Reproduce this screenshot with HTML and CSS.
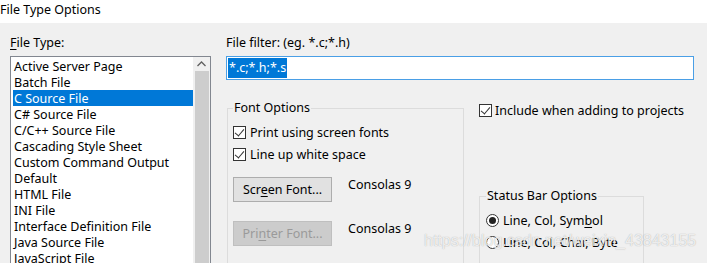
FILE: index.html
```html
<!DOCTYPE html>
<html lang="en">
<head>
    <meta charset="utf-8">
    <title>File Type Options</title>
    <link rel="stylesheet" href="styles.css">
</head>
<body>
    <div class="title-bar">File Type Options</div>

    <div class="dialog">
        <div class="left-col">
            <div class="field-label"><u>F</u>ile Type:</div>
            <div class="listbox">
                <ul class="type-list">
                    <li>Active Server Page</li>
                    <li>Batch File</li>
                    <li class="selected">C Source File</li>
                    <li>C# Source File</li>
                    <li>C/C++ Source File</li>
                    <li>Cascading Style Sheet</li>
                    <li>Custom Command Output</li>
                    <li>Default</li>
                    <li>HTML File</li>
                    <li>INI File</li>
                    <li>Interface Definition File</li>
                    <li>Java Source File</li>
                    <li>JavaScript File</li>
                </ul>
                <div class="scrollbar">
                    <div class="scroll-arrow">
                        <svg width="9" height="6" viewBox="0 0 9 6">
                            <path d="M0.5 5L4.5 1L8.5 5" fill="none" stroke="#606060" stroke-width="1.3"/>
                        </svg>
                    </div>
                    <div class="scroll-thumb"></div>
                </div>
            </div>
        </div>

        <div class="right-col">
            <div class="field-label">File filter: (eg. *.c;*.h)</div>
            <div class="filter-input"><span class="sel-text">*.c;*.h;*.s</span></div>

            <div class="options-row">
                <fieldset class="group font-options">
                    <legend>Font Options</legend>
                    <div class="check-row first">
                        <span class="checkbox checked"></span>
                        <span>Print using screen fonts</span>
                    </div>
                    <div class="check-row">
                        <span class="checkbox checked"></span>
                        <span>Line up white space</span>
                    </div>
                    <div class="font-row first">
                        <button class="btn">Scr<u>e</u>en Font...</button>
                        <span class="font-name">Consolas 9</span>
                    </div>
                    <div class="font-row">
                        <button class="btn" disabled>Pri<u>n</u>ter Font...</button>
                        <span class="font-name">Consolas 9</span>
                    </div>
                </fieldset>

                <div class="side-col">
                    <div class="check-row include">
                        <span class="checkbox checked"></span>
                        <span>Include when adding to projects</span>
                    </div>
                    <fieldset class="group status-options">
                        <legend>Status Bar Options</legend>
                        <div class="check-row first">
                            <span class="radio checked"></span>
                            <span>Line, Col, Sym<u>b</u>ol</span>
                        </div>
                        <div class="check-row">
                            <span class="radio"></span>
                            <span>Line, Col, Char, Byte</span>
                        </div>
                    </fieldset>
                </div>
            </div>
        </div>
    </div>

    <div class="watermark">https://blog.csdn.net/weixin_43843155</div>
</body>
</html>
```

FILE: styles.css
```css
* {
    margin: 0;
    padding: 0;
    box-sizing: border-box;
}

body {
    font-family: "Noto Sans", "Noto Sans CJK SC", sans-serif;
    font-size: 12.5px;
    color: #000;
    background-color: #f0f0f0;
    width: 707px;
    height: 263px;
    overflow: hidden;
    position: relative;
}

u {
    text-decoration-thickness: 1px;
    text-underline-offset: 2px;
}

.title-bar {
    background: #fff;
    height: 23px;
    line-height: 20px;
}

.dialog {
    display: flex;
    gap: 15px;
    padding-left: 10px;
}

.field-label {
    line-height: 16px;
    padding-top: 12px;
    margin-bottom: 5px;
}

/* File type list */
.left-col {
    width: 201px;
}

.listbox {
    display: flex;
    height: 230px;
    border: 1px solid #828790;
    background: #fff;
}

.type-list {
    list-style: none;
    flex: 1;
    padding: 1px 0 0 2px;
}

.type-list li {
    height: 16px;
    line-height: 17px;
    padding-left: 1px;
    white-space: nowrap;
}

.type-list li.selected {
    background: #0078d7;
    color: #fff;
}

.scrollbar {
    width: 17px;
    background: #f0f0f0;
    display: flex;
    flex-direction: column;
    align-items: center;
}

.scroll-arrow {
    height: 14px;
    display: flex;
    align-items: center;
    justify-content: center;
}

.scroll-thumb {
    width: 14px;
    flex: 1;
    background: #cdcdcd;
}

/* Right side */
.right-col {
    width: 468px;
}

.filter-input {
    height: 24px;
    border: 1px solid #4a9fe6;
    background: #fff;
    padding: 1px;
}

.sel-text {
    display: inline-block;
    background: #0078d7;
    color: #fff;
    line-height: 20px;
    padding: 0 1px;
}

.options-row {
    display: flex;
    margin-top: 20px;
}

.group {
    border: 1px solid #dcdcdc;
    padding: 0 0 0 5px;
    min-width: 0;
}

.group legend {
    line-height: 16px;
    padding: 0 1px;
}

.font-options {
    width: 237px;
    margin-left: 1px;
    padding-bottom: 11px;
}

.check-row {
    display: flex;
    align-items: center;
    gap: 4px;
    height: 22px;
    white-space: nowrap;
}

.check-row.first {
    margin-top: 5px;
}

.checkbox {
    flex: none;
    width: 13px;
    height: 13px;
    border: 1px solid #333;
    background: #fff;
    position: relative;
}

.checkbox.checked::after {
    content: "";
    position: absolute;
    left: 3px;
    top: 0px;
    width: 4px;
    height: 8px;
    border-right: 1.3px solid #333;
    border-bottom: 1.3px solid #333;
    transform: rotate(40deg);
}

.radio {
    flex: none;
    width: 13px;
    height: 13px;
    border: 1px solid #333;
    border-radius: 50%;
    background: #fff;
    display: flex;
    align-items: center;
    justify-content: center;
}

.radio.checked::after {
    content: "";
    width: 7px;
    height: 7px;
    border-radius: 50%;
    background: #222;
}

.font-row {
    display: flex;
    align-items: flex-start;
    gap: 16px;
    margin-top: 19px;
}

.font-row.first {
    margin-top: 12px;
}

.btn {
    width: 99px;
    height: 25px;
    font-family: inherit;
    font-size: 12.5px;
    color: #000;
    background: #e1e1e1;
    border: 1px solid #adadad;
}

.btn:disabled {
    background: #cccccc;
    border-color: #bfbfbf;
    color: #9a9a9a;
}

.font-name {
    line-height: 16px;
}

.side-col {
    margin-left: 15px;
}

.check-row.include {
    height: 20px;
    gap: 3px;
}

.status-options {
    width: 165px;
    height: 100px;
    margin-top: 68px;
    padding-left: 6px;
}

.watermark {
    position: absolute;
    left: 424px;
    top: 232px;
    font-family: "Liberation Sans", Arial, sans-serif;
    font-size: 16px;
    color: rgba(255, 255, 255, 0.8);
    text-shadow: 0 0 1px rgba(110, 110, 110, 0.6);
    white-space: nowrap;
}
```
